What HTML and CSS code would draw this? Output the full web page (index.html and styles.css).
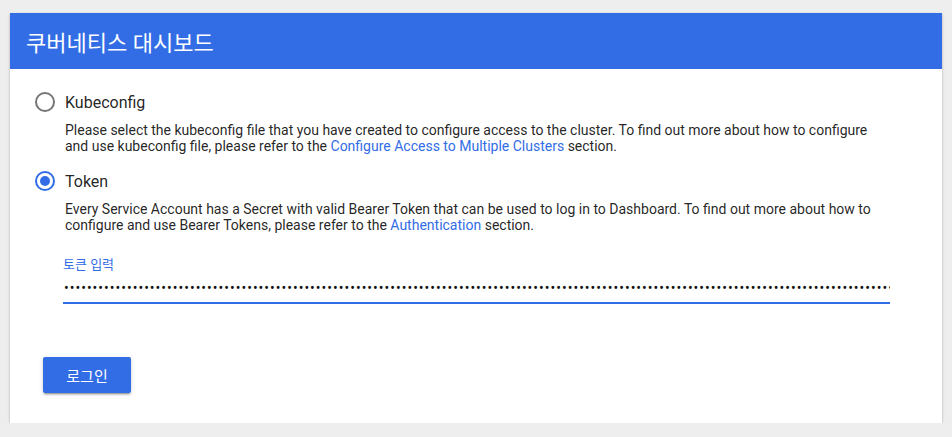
FILE: index.html
```html
<!DOCTYPE html>
<html lang="ko">
<head>
<meta charset="utf-8">
<link rel="stylesheet" href="styles.css">
</head>
<body>
<div class="card">
  <div class="card-header">쿠버네티스 대시보드</div>
  <div class="card-body">
    <div class="option">
      <div class="radio-row">
        <span class="radio"></span>
        <span class="radio-label">Kubeconfig</span>
      </div>
      <p class="desc">Please select the kubeconfig file that you have created to configure access to the cluster. To find out more about how to configure and use kubeconfig file, please refer to the <a href="#">Configure Access to Multiple Clusters</a> section.</p>
    </div>
    <div class="option">
      <div class="radio-row">
        <span class="radio checked"></span>
        <span class="radio-label">Token</span>
      </div>
      <p class="desc">Every Service Account has a Secret with valid Bearer Token that can be used to log in to Dashboard. To find out more about how to configure and use Bearer Tokens, please refer to the <a href="#">Authentication</a> section.</p>
    </div>
    <div class="field">
      <label class="field-label" for="token">토큰 입력</label>
      <input class="field-input" id="token" type="password" value="eyJhbGciOiJSUzI1NiIsImtpZCI6IiJ9eyJpc3MiOiJrdWJlcm5ldGVzL3NlcnZpY2VhY2NvdW50Iiwia3ViZXJuZXRlcy5pby9zZXJ2aWNlYWNjb3VudC9uYW1lc3BhY2UiOiJrdWJlLXN5c3RlbSIsImt1YmVybmV0ZXMuaW8vc2VydmljZWFjY291bnQvc2VjcmV0Lm5hbWUiOiJhZG1pbi11c2VyLXRva2VuIn0">
    </div>
    <div class="actions">
      <button class="btn">로그인</button>
    </div>
  </div>
</div>
</body>
</html>
```

FILE: styles.css
```css
html, body {
  margin: 0;
  padding: 0;
  background: #eeeeee;
}
body {
  padding: 13px 10px 0 10px;
  font-family: Roboto, "Noto Sans CJK KR", sans-serif;
  color: rgba(0, 0, 0, 0.87);
}
.card {
  background: #ffffff;
  box-shadow: 0 1px 3px rgba(0,0,0,0.2), 0 1px 1px rgba(0,0,0,0.14), 0 2px 1px -1px rgba(0,0,0,0.12);
  height: 410px;
  box-sizing: border-box;
}
.card-header {
  background: #326de6;
  color: #ffffff;
  height: 56px;
  display: flex;
  align-items: center;
  padding-left: 16px;
  font-size: 22px;
  font-family: Roboto, "Noto Sans CJK KR", sans-serif;
}
.card-body {
  padding: 23px 52px 0 25px;
}
.option {
  margin-bottom: 17px;
}
.radio-row {
  display: flex;
  align-items: center;
  height: 20px;
}
.radio {
  width: 20px;
  height: 20px;
  box-sizing: border-box;
  border: 2px solid rgba(0,0,0,0.54);
  border-radius: 50%;
  position: relative;
  flex: none;
}
.radio.checked {
  border-color: #326de6;
}
.radio.checked::after {
  content: "";
  position: absolute;
  left: 3px;
  top: 3px;
  width: 10px;
  height: 10px;
  border-radius: 50%;
  background: #326de6;
}
.radio-label {
  margin-left: 10px;
  font-size: 16px;
}
.desc {
  margin: 10px 0 0 30px;
  font-size: 14px;
  line-height: 16px;
}
.desc a {
  color: #326de6;
  text-decoration: none;
}
.field {
  margin: 25px 0 0 28px;
}
.field-label {
  display: block;
  color: #326de6;
  font-size: 13px;
  line-height: 14px;
  font-family: Roboto, "Noto Sans CJK KR", sans-serif;
}
.field-input {
  display: block;
  width: 100%;
  box-sizing: border-box;
  margin: 6px 0 0 0;
  height: 26px;
  padding: 0 0 4px 1px;
  border: none;
  outline: none;
  background: transparent;
  font-family: Roboto, sans-serif;
  font-size: 14px;
  letter-spacing: 1px;
  border-bottom: 2px solid #326de6;
  color: #111;
}
.actions {
  margin: 53px 0 0 8px;
}
.btn {
  background: #326de6;
  color: #ffffff;
  border: none;
  border-radius: 2px;
  width: 88px;
  height: 36px;
  font-size: 15px;
  font-family: Roboto, "Noto Sans CJK KR", sans-serif;
  box-shadow: 0 3px 1px -2px rgba(0,0,0,0.2), 0 2px 2px 0 rgba(0,0,0,0.14), 0 1px 5px 0 rgba(0,0,0,0.12);
  padding: 0;
}
```
